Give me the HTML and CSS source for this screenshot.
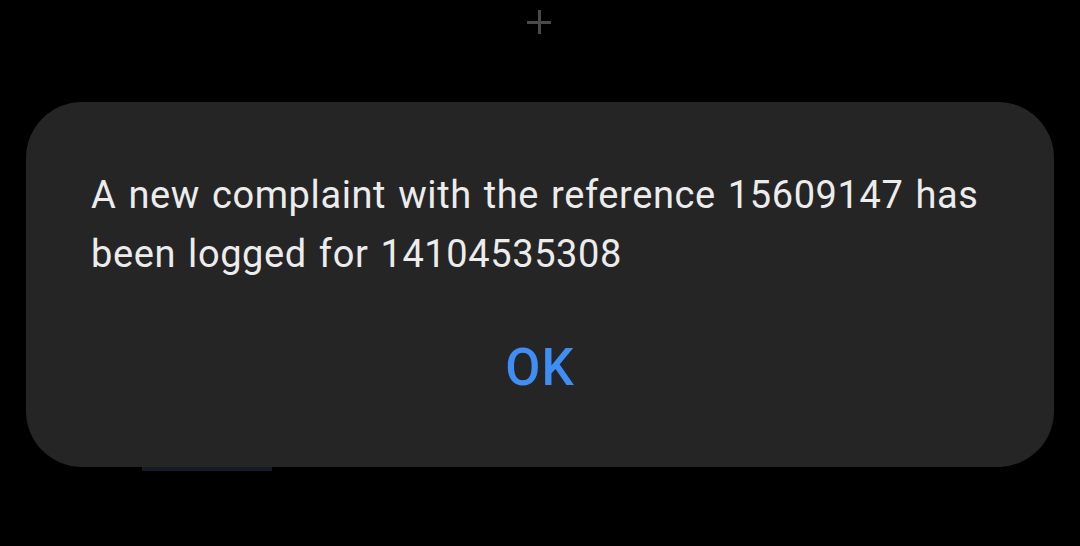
FILE: index.html
```html
<!DOCTYPE html>
<html lang="en">

<head>
    <meta charset="UTF-8" />
    <meta name="viewport" content="width=device-width, initial-scale=1.0" />
    <title>Complaint logged</title>
    <link rel="stylesheet" href="styles.css">
</head>

<body>
    <div class="screen">
        <div class="add-btn">
            <span class="plus"></span>
        </div>

        <div class="dialog">
            <p class="message">A new complaint with the reference 15609147 has been logged for 14104535308</p>
            <div class="actions">
                <a class="ok" href="javascript:;">OK</a>
            </div>
        </div>

        <!-- tab bar peeking under the dialog -->
        <div class="under-bar"></div>
    </div>
</body>

</html>
```

FILE: styles.css
```css
* {
    margin: 0;
    padding: 0;
    box-sizing: border-box;
}

html,
body {
    height: 100%;
    background: #000;
}

body {
    font-family: Roboto, "Noto Sans", sans-serif;
    overflow: hidden;
}

.screen {
    display: flex;
    flex-direction: column;
    height: 546px;
}

.add-btn {
    height: 102px;
    display: flex;
    justify-content: center;
    padding-top: 10px;
}

.plus {
    width: 24px;
    height: 24px;
    position: relative;
    margin-left: -2px;
}

.plus::before,
.plus::after {
    content: "";
    position: absolute;
    background: #4a4a4a;
}

.plus::before {
    left: 0;
    right: 0;
    top: 11px;
    height: 3px;
}

.plus::after {
    top: 0;
    bottom: 0;
    left: 11px;
    width: 3px;
}

.dialog {
    margin: 0 26px;
    height: 365px;
    background: #252525;
    border-radius: 56px;
    padding: 64px 40px 0 65px;
    display: flex;
    flex-direction: column;
}

.message {
    color: #ececec;
    font-size: 38px;
    line-height: 59px;
    letter-spacing: 0.6px;
    word-spacing: 2px;
}

.actions {
    display: flex;
    justify-content: center;
    margin-top: 54px;
    margin-left: -65px;
    margin-right: -40px;
}

.ok {
    color: #3e8ef5;
    font-size: 51px;
    font-weight: 500;
    letter-spacing: 1px;
    text-decoration: none;
    line-height: 60px;
}

.under-bar {
    width: 130px;
    height: 4px;
    margin-left: 142px;
    background: #161b26;
}
```
